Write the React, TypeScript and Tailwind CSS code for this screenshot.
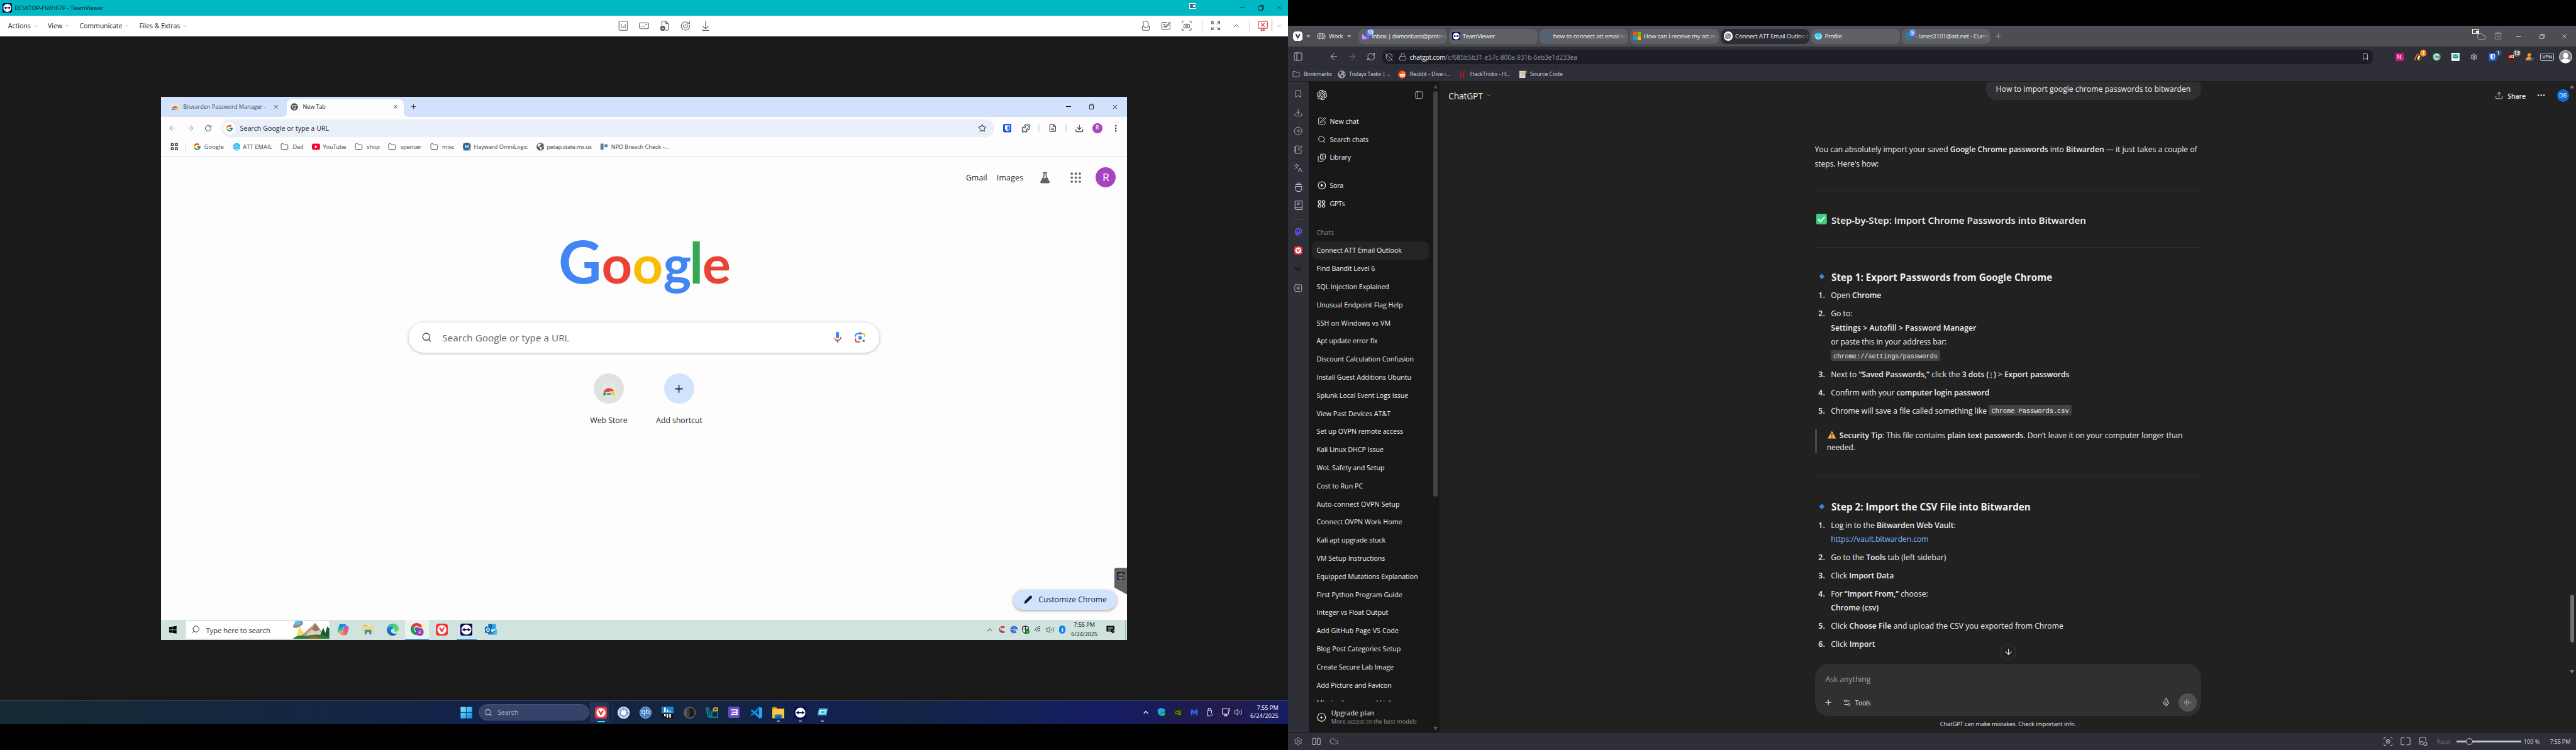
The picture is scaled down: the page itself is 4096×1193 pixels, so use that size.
import React, { useLayoutEffect, useRef } from "react";
import {
  ArrowDown, ArrowLeft, ArrowRight, Bookmark, Bus, ChevronDown, ChevronUp, CircleArrowRight,
  Cloud, Download, Folder, Images, Languages, Lock, Mic, MoreHorizontal, MoreVertical,
  NotebookPen, PanelLeft, Pencil, Plus, Puzzle, RefreshCw, RotateCw, Search, Settings, Settings2, ShieldOff,
  SquarePen, SquarePlus, Star, Trash2, Upload, Volume2, Wifi, X, FileSearch,
} from "lucide-react";
import { FcGoogle } from "react-icons/fc";
import { FaBluetoothB, FaChrome, FaGlobeAmericas, FaMastodon, FaRedditAlien, FaWikipediaW, FaWindows } from "react-icons/fa";
import { SiOpenai } from "react-icons/si";

/* Text whose tracking is tuned so the run takes exactly `w` units. */
function T({ w, className = "", children }: { w: number; className?: string; children: React.ReactNode }) {
  const ref = useRef<HTMLSpanElement>(null);
  useLayoutEffect(() => {
    const el = ref.current!;
    const fit = () => {
      const stage = el.closest("[data-stage]") as HTMLElement;
      const k = stage.getBoundingClientRect().width / 5120;
      el.style.letterSpacing = "0px";
      const natural = el.getBoundingClientRect().width / k;
      el.style.letterSpacing = `${(w - natural) / (el.textContent || " ").length}px`;
    };
    fit();
    document.fonts.ready.then(fit);
  }, [w]);
  return <span ref={ref} className={`inline-block shrink-0 translate-y-[0.05em] whitespace-nowrap ${className}`}>{children}</span>;
}

const Slot = ({ className = "", children }: { className?: string; children?: React.ReactNode }) => (
  <span className={`flex shrink-0 items-center justify-center ${className}`}>{children}</span>
);

/* ---------- brand marks ---------- */
const Tv = ({ s = 16, bg = "#050a50", fg = "#fff" }) => (
  <svg width={s} height={s} viewBox="0 0 24 24" className="shrink-0">
    <rect width="24" height="24" rx="4" fill={bg} />
    <circle cx="12" cy="12" r="10" fill={fg} />
    <path d="M3.5 12l5-3.6v2.4h7V8.400l5 3.600-5 3.600v-2.400h-7v2.400z" fill={bg} />
  </svg>
);
const Viv = ({ s = 24, bg = "#ef3939", fg = "#fff" }) => (
  <svg width={s} height={s} viewBox="0 0 24 24" className="shrink-0">
    <rect width="24" height="24" rx="5.500" fill={bg} />
    <circle cx="12" cy="12" r="9" fill={fg} />
    <path d="M8 8.500l3.800 7 4-7" fill="none" stroke={bg} strokeWidth="3" strokeLinecap="round" strokeLinejoin="round" />
  </svg>
);
const Att = ({ dim = false }) => (
  <svg width="16" height="16" viewBox="0 0 16 16" className="shrink-0">
    <circle cx="8" cy="8" r="7.500" fill={dim ? "#1593b8" : "#1fb6ea"} />
    <g fill="none" stroke={dim ? "#5b5b63" : "#fff"} strokeWidth="1">
      <path d="M2 4q5 2.500 11 0M0 7q7 2.800 15 0M1 10q7 2.800 14 0M3 13q5 2 10 0" />
    </g>
  </svg>
);
const Store = ({ s = 16 }) => (
  <svg width={s} height={s} viewBox="0 0 24 24" className="shrink-0">
    <path d="M1 2h22v21H1z" fill="#e6e8e6" />
    <path d="M9 5.500q3 2 6 0" stroke="#c9cbc9" fill="none" />
    <path d="M2 23a10 10 0 0 1 3-7l4 7z" fill="#34a058" />
    <path d="M3 17a10 10 0 0 1 18 0l-6 1H9z" fill="#dd4b3e" />
    <path d="M22 23a10 10 0 0 0-2-7h-7l3 7z" fill="#fcc934" />
    <path d="M7.500 23a4.500 4.500 0 0 1 9 0z" fill="#4285f4" stroke="#fff" />
  </svg>
);
const Chrome = () => (
  <svg width="26" height="26" viewBox="0 0 26 26">
    <path d="M12 12L1.600 6A12 12 0 0 1 22.400 6z" fill="#e33b2e" />
    <path d="M12 12L1.600 6A12 12 0 0 0 12 24z" fill="#279847" />
    <path d="M12 12L22.400 6A12 12 0 0 1 12 24z" fill="#fbc116" />
    <path d="M12 6h10.400L12 12z" fill="#e33b2e" />
    <circle cx="12" cy="12" r="6" fill="#fff" /><circle cx="12" cy="12" r="4.500" fill="#2f7be8" />
    <circle cx="18" cy="18" r="7.800" fill="#9233b0" />
    <text x="18" y="21.500" fontSize="10" fill="#fff" textAnchor="middle" fontFamily="Roboto">R</text>
  </svg>
);
const Edge = () => (
  <svg width="24" height="24" viewBox="0 0 24 24">
    <defs>
      <linearGradient id="eg" x1="0" y1="0" x2="1" y2="0.400"><stop offset="0" stopColor="#2aa5e0" /><stop offset="1" stopColor="#5be05a" /></linearGradient>
      <linearGradient id="eb" x1="0" y1="0" x2="1" y2="1"><stop offset="0" stopColor="#1a86d8" /><stop offset="1" stopColor="#0b4f9c" /></linearGradient>
    </defs>
    <path d="M0 12C0 5 5.500 0 12 0s12 5 12 10.500c0 3.500-3 5.500-6 5.500-3.500 0-4-1.500-3-3 1-2-1-5-4.500-5C5 8 1.500 10 0 12z" fill="url(#eg)" />
    <path d="M0 12c1-4 5-6 9-5.500 3.500.5 4 2.500 3.500 4C9 10 7.500 13 8.500 16s5.500 5.500 12 3.500C18.500 22.500 15.500 24 12 24 5 24 0 18.500 0 12z" fill="url(#eb)" />
  </svg>
);
const Copilot = () => (
  <svg width="24" height="24" viewBox="0 0 24 24">
    <defs>
      <linearGradient id="ca" x1="0" y1="0" x2="0.300" y2="1"><stop offset="0" stopColor="#1468dc" /><stop offset="0.500" stopColor="#19a9d6" /><stop offset="1" stopColor="#c6d338" /></linearGradient>
      <linearGradient id="cb" x1="1" y1="0" x2="0" y2="1"><stop offset="0" stopColor="#a457f0" /><stop offset="0.500" stopColor="#f0578f" /><stop offset="1" stopColor="#ffa13d" /></linearGradient>
    </defs>
    <path d="M7 1h8c2 0 2.500 1 3 3l.5 2h-3c-2 0-2.500 1-3 3l-2 7c-.5 2-1.500 3-3 3H4c-3 0-4-2-3-5l3-10c.6-2 1.500-3 3-3z" fill="url(#ca)" />
    <path d="M17 23H9c-2 0-2.500-1-3-3l-.5-2h3c2 0 2.500-1 3-3l2-7c.5-2 1.500-3 3-3H20c3 0 4 2 3 5l-3 10c-.6 2-1.500 3-3 3z" fill="url(#cb)" />
  </svg>
);
const Explorer = ({ s = 24 }) => (
  <svg width={s} height={s} viewBox="0 0 24 24">
    <path d="M0 2.500Q0 1 1.500 1H8l2 3H0z" fill="#e09a0c" />
    <path d="M0 4h24v17.500q0 1.500-1.500 1.500h-21Q0 23 0 21.500z" fill="#fdc93a" />
    <path d="M4.500 23v-5q0-2.500 2.500-2.500h10q2.500 0 2.500 2.500v5z" fill="#1379d1" />
    <path d="M8.500 19h7v4h-7z" fill="#0f5fae" />
  </svg>
);
const ClassicExplorer = () => (
  <svg width="23" height="22" viewBox="0 0 23 22">
    <path d="M1 2h8l1.500 2H1z" fill="#d99a1c" /><path d="M1 4h21v14H1z" fill="#fcd56b" />
    <path d="M5 20v-8q0-1 1-1h11q1 0 1 1v8h-4v-5H9v5z" fill="#2c8fd8" />
  </svg>
);
const Outlook = () => (
  <svg width="24" height="24" viewBox="0 0 24 24">
    <path d="M7 1h15v10H7z" fill="#2aa4ea" /><path d="M7 1h7.500v10H7z" fill="#1267b4" />
    <path d="M6 11l9 6 9-6v9.500q0 1.500-1.500 1.500H6z" fill="#1a86d8" /><path d="M24 12l-10 10h8.500q1.500 0 1.500-1.500z" fill="#4cc0f4" />
    <rect y="6" width="12.500" height="12.500" rx="1" fill="#0f6cbd" />
    <ellipse cx="6.200" cy="12.200" rx="2.800" ry="3.200" fill="none" stroke="#fff" strokeWidth="1.600" />
  </svg>
);
const Scene = () => (
  <svg width="72" height="36" viewBox="0 0 72 36">
    <path d="M12 12L6 36h24z" fill="#f4dd6b" />
    <path d="M12 34L44 5l22 30z" fill="#c3987c" /><path d="M44 5l-8 18 12 5 10-4z" fill="#9c745c" /><path d="M30 24l8-6 8 4 6-4 8 12H26z" fill="#d9cfc8" />
    <ellipse cx="10" cy="8" rx="11" ry="5.500" transform="rotate(-28 10 8)" fill="#8b909c" /><ellipse cx="9" cy="4.500" rx="6" ry="4" fill="#52c4ec" />
    <path d="M0 36q10-9 26-5 20-6 46 0v6H0z" fill="#2b7c35" /><path d="M28 36l12-6 16 6z" fill="#a0622d" />
    <path d="M60 14l-6 16h12zM68 12l-6 20h10V16z" fill="#1d5a33" />
  </svg>
);
const Win11 = () => (
  <svg width="24" height="24" viewBox="0 0 24 24">
    <defs><linearGradient id="w" x1="0" y1="0" x2="1" y2="1"><stop offset="0" stopColor="#7fe6fb" /><stop offset="1" stopColor="#0a8cf0" /></linearGradient></defs>
    <path d="M.5.500h11v11H.5zM12.500.500h11v11h-11zM.5 12.500h11v11H.5zM12.500 12.500h11v11h-11z" fill="url(#w)" />
  </svg>
);
const Restore = ({ s = 11, c = "#111" }) => (
  <svg width={s} height={s} viewBox="0 0 11 11" fill="none" stroke={c}><path d="M.5 2.500h7.500v8H.5z" /><path d="M3 2.500V.5h7.500v8H8" /></svg>
);
const BwShield = ({ s = 18 }) => (
  <svg width={s} height={s} viewBox="0 0 18 18"><rect width="18" height="18" rx="3" fill="#1a5ae0" /><path d="M4 3h10v6.500c0 3-3 5-5 6-2-1-5-3-5-6z" fill="#fff" /><path d="M9 4.500h3.500v5c0 2-2 3.500-3.500 4.300z" fill="#1a5ae0" /></svg>
);
const GlobeDot = ({ c = "#5f6368" }) => <FaGlobeAmericas size={16} color={c} className="shrink-0" />;
const Flask = () => (
  <svg width="24" height="24" viewBox="0 0 24 24" className="shrink-0" fill="none" stroke="#5f6368" strokeWidth="2">
    <path d="M8 2h8M10 2v7L4 20q-.7 2 1.500 2h13q2.200 0 1.500-2L14 9V2" /><path d="M8 14l8-1 4 8H4z" fill="#5f6368" />
  </svg>
);
const GDots = () => (
  <svg width="24" height="24" viewBox="0 0 24 24" className="shrink-0" fill="#5f6368">
    {[4, 12, 20].map((x) => [4, 12, 20].map((y) => <circle key={`${x}-${y}`} cx={x} cy={y} r="2.300" />))}
  </svg>
);
const MicG = () => (
  <svg width="24" height="24" viewBox="0 0 24 24" fill="none" strokeWidth="2.200">
    <rect x="8.800" y="1" width="6.400" height="13" rx="3.200" fill="#4285f4" />
    <path d="M5 11a7 7 0 0 0 2 5" stroke="#fbbc04" /><path d="M7 16a7 7 0 0 0 10 0q2-2 2-5" stroke="#ea4335" /><path d="M12 18v5" stroke="#34a853" />
  </svg>
);
const Lens = () => (
  <svg width="24" height="24" viewBox="0 0 24 24" fill="none" strokeWidth="2.400">
    <path d="M3 11V8q0-3 3-3h10" stroke="#4285f4" /><path d="M8 5l1.500-3h5L16 5z" fill="#4285f4" /><path d="M16 5h2q3 0 3 3v3" stroke="#fbbc04" />
    <path d="M3 14v4q0 3 3 3h6" stroke="#ea4335" /><circle cx="12" cy="13" r="3.600" fill="#4285f4" /><circle cx="19" cy="19" r="2.400" fill="#34a853" />
  </svg>
);
const Caret = () => <svg width="8" height="5" viewBox="0 0 8 5" className="shrink-0"><path d="M0 0h8L4 5z" fill="#a9a9b0" /></svg>;
const Diamond = () => <svg width="12" height="12" viewBox="0 0 12 12"><path d="M6 .5L11.500 6 6 11.500.5 6z" fill="#3f86dd" /></svg>;
const Tri = ({ down = false, c = "#5c5c5c" }) => <svg width="9" height="7" viewBox="0 0 9 7"><path d={down ? "M0 0h9L4.500 7z" : "M0 7h9L4.500 0z"} fill={c} /></svg>;

/* ---------- remote desktop ---------- */
const Bm = ({ icon, label, w, gap = "gap-[6px]" }: { icon: React.ReactNode; label: string; w: number; gap?: string }) => (
  <span className={`flex shrink-0 items-center ${gap}`}>{icon}<T w={w} className="text-[11.500px] text-[#3c4043]">{label}</T></span>
);
const Fold = () => <Folder size={16} color="#44484c" strokeWidth={1.800} className="shrink-0" />;

function RemoteChrome() {
  return (
    <div className="relative flex h-[1040px] flex-col bg-[#fdfdfd]">
      <div className="flex h-[40px] items-center bg-[#d2e1fc] pl-[20px]">
        <Store />
        <T w={164} className="ml-[8px] text-[11.500px] text-[#474b50]">Bitwarden Password Manager -</T>
        <Slot className="ml-[12px] w-[16px]"><X size={12} strokeWidth={2.300} color="#333" /></Slot>
        <div className="relative ml-[14px] flex h-[34px] w-[232px] items-center self-end rounded-t-[10px] bg-[#fdfdfd] px-[8px] pb-[6px]">
          <svg className="absolute bottom-0 -left-[10px]" width="10" height="10"><path d="M10 0v10H0q10 0 10-10z" fill="#fdfdfd" /></svg>
          <svg className="absolute -right-[10px] bottom-0" width="10" height="10"><path d="M0 0v10h10Q0 10 0 0z" fill="#fdfdfd" /></svg>
          <FaChrome size={15} color="#4b4f54" />
          <T w={45} className="ml-[9px] text-[11.500px] text-[#1f1f1f]">New Tab</T>
          <Slot className="ml-auto w-[16px]"><X size={12} strokeWidth={2.300} color="#222" /></Slot>
        </div>
        <Slot className="ml-[12px] w-[16px]"><Plus size={14} strokeWidth={2} color="#333" /></Slot>
        <Slot className="ml-auto w-[46px]"><span className="h-[1px] w-[10px] bg-black" /></Slot>
        <Slot className="w-[46px]"><Restore c="#000" /></Slot>
        <Slot className="mr-[1px] w-[46px]"><X size={15} strokeWidth={1.500} color="#000" /></Slot>
      </div>
      <div className="flex h-[46px] shrink-0 items-center pl-[4px]">
        <Slot className="w-[36px]"><ArrowLeft size={17} color="#a5a8ad" /></Slot>
        <Slot className="w-[36px]"><ArrowRight size={17} color="#a5a8ad" /></Slot>
        <Slot className="w-[36px]"><RotateCw size={15} color="#3f4246" /></Slot>
        <div className="ml-[8px] flex h-[34px] w-[1536px] items-center rounded-full bg-[#e9f0f9] pl-[4px]">
          <Slot className="h-[24px] w-[24px] rounded-full bg-white"><FcGoogle size={15} /></Slot>
          <T w={177} className="ml-[9px] text-[13.300px] text-[#1f2125]">Search Google or type a URL</T>
          <Star size={17} color="#3f4246" strokeWidth={1.800} className="mr-[15px] ml-auto" />
        </div>
        <Slot className="ml-[17px] w-[18px]"><BwShield s={17} /></Slot>
        <Slot className="ml-[19px] w-[18px]"><Puzzle size={18} color="#3f4246" /></Slot>
        <span className="ml-[16px] h-[16px] w-[2px] bg-[#cfe0fb]" />
        <Slot className="ml-[17px] w-[18px]"><FileSearch size={17} color="#3f4246" /></Slot>
        <span className="ml-[17px] h-[16px] w-[2px] bg-[#cfe0fb]" />
        <Slot className="ml-[17px] w-[18px]"><Download size={18} color="#3f4246" /></Slot>
        <Slot className="ml-[16px] h-[20px] w-[20px] rounded-full bg-[#a843bd] font-[Roboto] text-[11px] text-white">R</Slot>
        <Slot className="ml-[18px] w-[18px]"><MoreVertical size={18} strokeWidth={2.500} color="#3f4246" /></Slot>
      </div>
      <div className="flex h-[35px] shrink-0 items-center border-b border-[#d9dbde] pb-[6px] pl-[17px]">
        <svg width="18" height="16" viewBox="0 0 18 16" fill="none" stroke="#3f4246" strokeWidth="1.800"><path d="M3 1.500h4v4H3zM11 1.500h4v4h-4zM3 10h4v4H3zM11 10h4v4h-4z" /></svg>
        <span className="mr-[14px] ml-[14px] h-[16px] w-[1px] bg-[#c3d5f3]" />
        <div className="flex items-center gap-[17px]">
          <Bm icon={<FcGoogle size={16} />} label="Google" w={39} />
          <Bm icon={<Att />} label="ATT EMAIL" w={58} gap="gap-[5px]" />
          <Bm icon={<Fold />} label="Dad" w={21} gap="gap-[8px]" />
          <Bm icon={<svg width="16" height="16" viewBox="0 0 16 16"><rect y="2" width="16" height="12" rx="3" fill="#f5062e" /><path d="M6 5v6l5-3z" fill="#fff" /></svg>} label="YouTube" w={46} />
          <Bm icon={<Fold />} label="shop" w={26} gap="gap-[8px]" />
          <Bm icon={<Fold />} label="spencer" w={42} gap="gap-[8px]" />
          <Bm icon={<Fold />} label="misc" w={24} gap="gap-[8px]" />
          <Bm icon={<Slot className="h-[16px] w-[16px] bg-[#b9c4ca]"><Slot className="h-[15px] w-[15px] rounded-full bg-[#1b5d8a] text-[11px] font-bold text-white">H</Slot></Slot>} label="Hayward OmniLogic" w={107} />
          <Bm icon={<GlobeDot />} label="petap.state.ms.us" w={89} gap="gap-[5px]" />
          <Bm icon={<svg width="16" height="16" viewBox="0 0 16 16" fill="#5d7f9b"><path d="M1 2h6v12H1zM9 3h6v6H9z" /></svg>} label="NPD Breach Check -..." w={115} />
        </div>
      </div>
      <div className="flex flex-1 flex-col items-center pt-[20px]">
        <div className="flex h-[40px] items-center self-end pr-[22px] text-[15.200px] text-[#202124]">
          <T w={42}>Gmail</T>
          <T w={53} className="ml-[19px]">Images</T>
          <Slot className="ml-[31px]"><Flask /></Slot>
          <Slot className="ml-[37px]"><GDots /></Slot>
          <Slot className="ml-[28px] h-[40px] w-[40px] rounded-full bg-[#a843bd] font-[Roboto] text-[21px] text-white">R</Slot>
        </div>
        <div className="mt-[86px] flex h-[120px] items-baseline font-[Lato] text-[106px] leading-[120px] font-bold">
          <span className="w-[85px] text-center text-[118px] text-[#4285f4]">G</span>
          <span className="w-[62px] text-center text-[#ea4335]">o</span>
          <span className="w-[60px] text-center text-[#fbbc05]">o</span>
          <span className="w-[58px] text-center text-[#4285f4]">g</span>
          <span className="w-[21px] text-[112px] text-[#34a853]"><span className="-mx-[5px]">l</span></span>
          <span className="w-[54px] text-center text-[#ea4335]">e</span>
        </div>
        <div className="mt-[62px] flex h-[60px] w-[934px] items-center rounded-full bg-white pr-[25px] pl-[25px] shadow-[0_1px_7px_rgba(32,33,36,0.300)]">
          <Search size={21} color="#5f6368" strokeWidth={2.300} />
          <T w={253} className="ml-[20px] text-[19px] text-[#5f6368]">Search Google or type a URL</T>
          <Slot className="mr-[22px] ml-auto"><MicG /></Slot>
          <Lens />
        </div>
        <div className="mt-[42px] flex">
          <div className="flex w-[140px] flex-col items-center">
            <Slot className="h-[60px] w-[60px] rounded-full bg-[#e0e2df]"><Store s={28} /></Slot>
            <T w={74} className="mt-[22px] text-[15.200px] leading-[20px] text-[#1f1f1f]">Web Store</T>
          </div>
          <div className="flex w-[140px] flex-col items-center">
            <Slot className="h-[60px] w-[60px] rounded-full bg-[#d3e3fd]"><Plus size={24} color="#041e49" /></Slot>
            <T w={92} className="mt-[22px] text-[15.200px] leading-[20px] text-[#1f1f1f]">Add shortcut</T>
          </div>
        </div>
      </div>
      <div className="absolute right-[20px] bottom-[20px] flex h-[40px] w-[206px] items-center rounded-full bg-[#d3e3fd] pl-[21px] shadow-[0_2px_5px_rgba(0,0,0,0.350)]">
        <Pencil size={17} fill="#041e49" color="#041e49" />
        <T w={136} className="ml-[12px] text-[15.200px] text-[#041e49]">Customize Chrome</T>
      </div>
      <div className="absolute right-0 bottom-[50px] flex h-[53px] w-[25px] justify-center rounded-tl-[4px] bg-[#606060] pt-[8px] [clip-path:polygon(0_0,100%_0,100%_100%,0_74%)]">
        <Tv s={16} bg="#12123a" fg="#6d6d72" />
      </div>
    </div>
  );
}

function RemoteTaskbar() {
  return (
    <div className="flex h-[40px] items-center bg-[#d0e3df]">
      <Slot className="w-[48px]"><FaWindows size={17} color="#000" /></Slot>
      <div className="flex h-[39px] w-[288px] items-center border border-[#c2c6c5] bg-white pl-[11px]">
        <Search size={18} strokeWidth={1.500} color="#222" className="scale-x-[-1]" />
        <T w={128} className="ml-[11px] text-[14.500px] text-[#333]">Type here to search</T>
        <span className="ml-auto self-end"><Scene /></span>
      </div>
      <Slot className="ml-[2px] w-[49px]"><Copilot /></Slot>
      <Slot className="w-[49px]"><ClassicExplorer /></Slot>
      <Slot className="w-[49px]"><Edge /></Slot>
      <Slot className="h-[40px] w-[48px] border-b-2 border-[#0078d7] bg-[#eaf2f0]"><Chrome /></Slot>
      <Slot className="w-[50px]"><Viv /></Slot>
      <Slot className="mx-[4px] h-[40px] w-[40px] border-b-2 border-[#0078d7]"><Tv s={24} /></Slot>
      <Slot className="w-[50px]"><Outlook /></Slot>
      <div className="ml-auto flex h-full items-center">
        <Slot className="w-[24px]"><ChevronUp size={17} strokeWidth={1.700} color="#111" /></Slot>
        <Slot className="w-[24px]"><svg width="16" height="16" viewBox="0 0 16 16"><path d="M14 3a7 7 0 1 0 0 10l-3-2.500a3.500 3.500 0 1 1 0-5z" fill="#d2322c" /><path d="M7 7l3 6-5 1z" fill="#4178c0" /><path d="M4 2l3 6-3 1z" fill="#f3c99a" /></svg></Slot>
        <Slot className="w-[24px]"><svg width="16" height="16" viewBox="0 0 16 16"><circle cx="8" cy="8" r="7.500" fill="#3b6fc9" /><path d="M8 1v13M1 8h14" stroke="#bcd0ee" /><path d="M9 9h6v6z" fill="#d0e3df" /></svg></Slot>
        <Slot className="w-[24px]"><svg width="17" height="17" viewBox="0 0 17 17"><path d="M8 1l6 2v5c0 4-3 6-6 8-3-2-6-4-6-8V3z" fill="#fff" stroke="#111" strokeWidth="1.300" /><path d="M8 1v14M2 7h12" stroke="#111" strokeWidth="1.300" /><circle cx="12" cy="12" r="4.500" fill="#0f8a38" /><path d="M10 12l1.500 1.500L14 11" stroke="#fff" fill="none" /></svg></Slot>
        <Slot className="w-[24px]"><Wifi size={16} strokeWidth={1.500} color="#111" className="rotate-[-40deg]" /></Slot>
        <Slot className="w-[24px]"><Volume2 size={17} strokeWidth={1.300} color="#111" /></Slot>
        <Slot className="w-[24px]"><Slot className="h-[16px] w-[12px] rounded-full bg-[#0a7fe6]"><FaBluetoothB size={10} color="#fff" /></Slot></Slot>
        <div className="flex w-[64px] flex-col items-center text-[11.500px] leading-[18px] text-[#111]">
          <T w={42}>7:55 PM</T>
          <T w={52}>6/24/2025</T>
        </div>
        <Slot className="w-[40px]"><svg width="17" height="17" viewBox="0 0 17 17"><path d="M.5.500h16V12h-3v4L9.500 12h-9z" fill="#0a0a0a" /><path d="M3.500 3.500h10M3.500 6.300h10M3.500 9h6" stroke="#dbe8e5" strokeWidth="1.200" /><path d="M10 13.500a3.500 3.500 0 1 0 4-5 4 4 0 0 1-4 5z" fill="#0a0a0a" stroke="#d0e3df" strokeWidth=".7" /></svg></Slot>
        <span className="mr-[3px] ml-[9px] h-full w-[1px] bg-[#a3b3b0]" />
      </div>
    </div>
  );
}

function TvMenu({ label, w }: { label: string; w: number }) {
  return <span className="flex items-center gap-[5px]"><T w={w} className="text-[13.300px] text-[#1c1c1c]">{label}</T><ChevronDown size={10} strokeWidth={2} color="#777" /></span>;
}

function Dot() {
  return <span className="absolute bottom-[5px] h-[3px] w-[6px] rounded-full bg-[#9aa3b5]" />;
}
const TaskApp = ({ children, dot = false }: { children: React.ReactNode; dot?: boolean }) => (
  <Slot className="relative h-[48px] w-[44px]">{children}{dot && <Dot />}</Slot>
);

function LeftMonitor() {
  return (
    <div className="flex h-[1491px] w-[2560px] shrink-0 flex-col bg-black">
      <div className="flex h-[31px] shrink-0 items-center bg-[#00b7c4] pl-[5px]">
        <Tv s={19} />
        <T w={177} className="ml-[5px] text-[11.500px] text-[#0b1b1f]">DESKTOP-F6VH67P - TeamViewer</T>
        <span className="mr-[72px] mb-[7px] ml-auto flex h-[11px] w-[14px] items-center justify-end border border-white bg-[#3a6f80] pr-[2px]"><span className="h-[4px] w-[4px] bg-white" /></span>
        <Slot className="w-[38px]"><span className="h-[1.500px] w-[9px] bg-[#111]" /></Slot>
        <Slot className="w-[38px]"><Restore /></Slot>
        <Slot className="w-[34px]"><X size={13} strokeWidth={1.600} color="#111" /></Slot>
      </div>
      <div className="flex h-[41px] shrink-0 items-center border-b border-[#bfc3c6] bg-white pl-[16px]">
        <div className="flex gap-[19px]">
          <TvMenu label="Actions" w={45} /><TvMenu label="View" w={29} /><TvMenu label="Communicate" w={85} /><TvMenu label="Files & Extras" w={81} />
        </div>
        <div className="ml-[856px] flex gap-[21px] text-[#5c6064]">
          <svg width="20" height="20" viewBox="0 0 20 20" fill="none" stroke="currentColor" strokeWidth="1.400"><rect x="1.500" y="1" width="17" height="18" rx="2.500" /><path d="M6 15V6M10 15v-4M14 15V7" /></svg>
          <svg width="20" height="20" viewBox="0 0 20 20" fill="none" stroke="currentColor" strokeWidth="1.400"><rect x="1" y="4" width="18" height="12" rx="2.500" /><path d="M4.500 11.500h2M9 11.500h2M13 7.500h3" strokeWidth="2" /></svg>
          <svg width="20" height="20" viewBox="0 0 20 20" fill="none" stroke="currentColor" strokeWidth="1.400"><path d="M4 9V3q0-2 2-2h6l5 5v11q0 2-2 2h-4M12 1v5h5" /><circle cx="6" cy="15" r="4.500" fill="currentColor" /><path d="M4 14l2 2 2-2" stroke="#fff" /></svg>
          <svg width="20" height="20" viewBox="0 0 20 20" fill="none" stroke="currentColor" strokeWidth="1.400"><path d="M15 4a8.300 8.300 0 1 0 3 5M18 1v5h-5M10 6v5M7.500 7.500a4 4 0 1 0 5 0" /></svg>
          <svg width="20" height="20" viewBox="0 0 20 20" fill="none" stroke="currentColor" strokeWidth="1.500"><path d="M10 1v15M4.500 11l5.500 5 5.500-5M3 19.200h14" /></svg>
        </div>
        <div className="mr-[13px] ml-auto flex items-center text-[#5c6064]">
          <svg width="20" height="20" viewBox="0 0 20 20" fill="none" stroke="currentColor" strokeWidth="1.300"><path d="M5 11V3q0-2 2-2h5l3 4v6M3 11h3q1 3 4 3t4-3h3v6q0 2-2 2H5q-2 0-2-2z" /></svg>
          <svg className="ml-[21px]" width="20" height="20" viewBox="0 0 20 20" fill="none" stroke="currentColor" strokeWidth="1.300"><path d="M12 3H4Q1.500 3 1.500 5.500v9Q1.500 17 4 17h12q2 0 2-2V8M4 9q3-4 4-1t-2 4 3 0l8-9 2 1.500-8 8-2 .5" /></svg>
          <svg className="ml-[21px]" width="20" height="20" viewBox="0 0 20 20" fill="none" stroke="currentColor" strokeWidth="1.400"><path d="M1 5V3q0-2 2-2h2M15 1h2q2 0 2 2v2M19 15v2q0 2-2 2h-2M5 19H3q-2 0-2-2v-2M4.500 14V8h3l1-1.500h3l1 1.500h3v6z" /><circle cx="10" cy="11" r="2" /></svg>
          <span className="ml-[21px] h-[20px] w-[1px] bg-[#d5d7d9]" />
          <svg className="ml-[15px]" width="20" height="20" viewBox="0 0 20 20" fill="none" stroke="currentColor" strokeWidth="1.600"><path d="M2 7V2h5M2 2l5 5M18 7V2h-5M18 2l-5 5M2 13v5h5M2 18l5-5M18 13v5h-5M18 18l-5-5" /></svg>
          <ChevronUp size={20} strokeWidth={1.500} className="ml-[22px]" />
          <span className="ml-[15px] h-[20px] w-[1px] bg-[#d5d7d9]" />
          <svg className="ml-[16px]" width="20" height="20" viewBox="0 0 20 20" fill="none" stroke="#d3433f" strokeWidth="1.600"><rect x="1" y="1" width="18" height="14" rx="2" /><path d="M6.500 4.500l7 7M13.500 4.500l-7 7M8 15v3.500M12 15v3.500M5.500 19h9" /></svg>
          <span className="ml-[8px] h-[24px] w-[1px] bg-[#8d9093]" />
          <ChevronDown size={10} strokeWidth={2} className="ml-[8px]" />
        </div>
      </div>
      <div className="flex h-[1320px] shrink-0 justify-center bg-[#191919] pt-[120px]">
        <div className="h-[1080px] w-[1920px]"><RemoteChrome /><RemoteTaskbar /></div>
      </div>
      <div className="flex h-[48px] shrink-0 items-center border-t border-[#3b4456] bg-[linear-gradient(90deg,#152a35_0px,#14283d_400px,#12224c_1000px,#14263f_1380px,#122150_1650px,#132444_1800px,#14205a_2080px,#151c62_2200px,#201b50_2380px,#221b50_2460px,#151d66_2560px)] pl-[905px]">
        <TaskApp><Win11 /></TaskApp>
        <div className="ml-[2px] flex h-[32px] w-[220px] items-center rounded-full border border-[#47526f] bg-[#35426a] pl-[10px]">
          <Search size={16} color="#c3cbdc" />
          <T w={41} className="ml-[11px] text-[13.300px] text-[#aeb8cc]">Search</T>
        </div>
        <Slot className="relative ml-[2px] h-[40px] w-[38px] rounded-[4px] bg-[#27335a] pl-[4px]"><Viv /><span className="absolute bottom-0 left-[14px] h-[3px] w-[16px] rounded-full bg-[#1cecff]" /></Slot>
        <span className="h-[38px] w-[6px] rounded-r-[4px] border-r border-[#27335a]" />
        <TaskApp><svg width="24" height="24" viewBox="0 0 24 24"><circle cx="12" cy="12" r="12" fill="#f2f6fb" /><circle cx="12" cy="12" r="7.500" fill="none" stroke="#4b8fd8" strokeWidth="5" strokeDasharray="1.600 1" /><circle cx="12" cy="12" r="4" fill="#fff" /></svg></TaskApp>
        <TaskApp><Slot className="h-[24px] w-[24px] rounded-full border border-[#b9d2ef] bg-[#3f7cc8] pb-[3px] text-[14px] text-white">qb</Slot></TaskApp>
        <TaskApp><svg width="24" height="24" viewBox="0 0 24 24"><rect width="24" height="24" rx="2.500" fill="#17181c" /><path d="M0 13V2.500Q0 0 2.500 0h19Q24 0 24 2.500V13z" fill="#1c87c4" /><path d="M6.500 2v9M11.500 6v5M17 9.500v2M6.500 15v4M11.500 15v7M17 15v7" stroke="#fff" strokeWidth="3" /></svg></TaskApp>
        <TaskApp><svg width="24" height="24" viewBox="0 0 24 24"><circle cx="12" cy="12" r="11" fill="#1b1b1b" stroke="#77777a" strokeWidth="1.600" /><path d="M7 2.500a11 11 0 0 0 0 19z" fill="#555" /><path d="M7 2h5v20H7z" fill="#3b3b3b" /></svg></TaskApp>
        <TaskApp><svg width="26" height="24" viewBox="0 0 26 24" fill="none" strokeWidth="2.800"><path d="M1 3h4l3 11V21h4V10h12v11H14" stroke="#0e7b8c" /><path d="M1 3l4 17h4" stroke="#0e7b8c" /><path d="M14 7.500h9.500V3H17l-2 4" stroke="#f0921f" /></svg></TaskApp>
        <TaskApp><Slot className="h-[22px] w-[22px] rounded-[3px] bg-[#6a4bc9]"><svg width="14" height="12" viewBox="0 0 14 12" fill="none" stroke="#fff" strokeWidth="2.200"><path d="M0 1.500h12.500v9H0M2 6h10" /></svg></Slot></TaskApp>
        <TaskApp><svg width="24" height="24" viewBox="0 0 24 24"><path d="M17.500 0L24 3v18l-6.500 3z" fill="#2aa6f2" /><path d="M18 0v7L3 18.500l-2.500-2z" fill="#0f7fcb" /><path d="M18 24v-7L3 5.500l-2.500 2z" fill="#1390dc" /></svg></TaskApp>
        <TaskApp dot><Explorer /></TaskApp>
        <TaskApp dot><Tv s={24} /></TaskApp>
        <TaskApp dot><svg width="22" height="18" viewBox="0 0 22 18"><path d="M4 1h17.500l-2.500 14H1z" fill="#3db7e8" /><path d="M6 4h12l-1.300 8H4.600z" fill="#e8f8ff" /><path d="M8 6.500h8l-.7 3.500H7.300z" fill="#2f9ed2" /></svg></TaskApp>
        <div className="mr-[19px] ml-auto flex items-center">
          <Slot className="w-[32px]"><ChevronUp size={15} strokeWidth={2.500} color="#fff" /></Slot>
          <Slot className="w-[32px]"><svg width="17" height="17" viewBox="0 0 17 17"><path d="M8 0l7 2.500v5c0 4-3 7-7 9-4-2-7-5-7-9v-5z" fill="#21a3e8" /><circle cx="12" cy="12" r="4.500" fill="#0f9a48" /><path d="M10 12l1.500 1.500L14 11" stroke="#fff" fill="none" /></svg></Slot>
          <Slot className="w-[32px]"><Slot className="h-[16px] w-[16px] bg-[#1d2a1e]"><svg width="12" height="9" viewBox="0 0 12 9" fill="none" stroke="#76b900" strokeWidth="1.300"><path d="M0 4.500Q5-1 9 4.500 5 9 0 4.500M7 1h4v7H7" /></svg></Slot></Slot>
          <Slot className="w-[32px]"><svg width="17" height="15" viewBox="0 0 17 15"><path d="M3 14Q-1 5 4 1l4.500 5L13 1q5 4 1 13l-2.500-1 1-6-4 4.500-4-4.500 1 6z" fill="#2f64e8" /></svg></Slot>
          <Slot className="w-[32px]"><svg width="14" height="17" viewBox="0 0 14 17" fill="none" stroke="#fff" strokeWidth="1.200"><path d="M4 5V1h5v4M2.500 5h8v6M2.500 5v11H7M7.500 14l2 2 4-4" /></svg></Slot>
          <Slot className="w-[32px]"><svg width="17" height="17" viewBox="0 0 17 17" fill="none" stroke="#fff" strokeWidth="1.200"><path d="M10 1.500H1v11h12V7M4 16h7M6 12.500V16M9 12.500V16M12 1h4v4h-4zM14 5v3" /></svg></Slot>
          <Slot className="-ml-[4px] w-[24px]"><Volume2 size={17} strokeWidth={1.500} color="#fff" /></Slot>
          <div className="ml-[11px] flex w-[57px] flex-col items-end text-[11.500px] leading-[16px] text-white">
            <T w={43}>7:55 PM</T>
            <T w={56}>6/24/2025</T>
          </div>
        </div>
      </div>
    </div>
  );
}

/* ---------- Vivaldi with ChatGPT ---------- */
const GptMark = () => <Slot className="h-[18px] w-[18px] rounded-full bg-white"><SiOpenai size={12} color="#222" /></Slot>;

function Tab({ icon, label, w, active = false }: { icon: React.ReactNode; label: string; w: number; active?: boolean }) {
  return (
    <div className={`relative flex h-[30px] w-[176px] shrink-0 items-center gap-[5px] rounded-[11px] pl-[6px] ${active ? "bg-[#2c2c34]" : "bg-[#5f5f66]"}`}>
      {icon}
      <T w={w} className="text-[12.300px] text-[#f0f0f2]">{label}</T>
      <span className={`absolute top-[4px] right-[3px] h-[22px] w-[18px] bg-gradient-to-r from-transparent ${active ? "to-[#2c2c34]" : "to-[#5f5f66]"}`} />
    </div>
  );
}
const Badge = ({ children, className }: { children: React.ReactNode; className: string }) => (
  <span className={`absolute flex h-[14px] items-center justify-center rounded-full text-[10.500px] font-semibold text-white ${className}`}>{children}</span>
);

function VivaldiChrome() {
  return (
    <>
      <div className="flex h-[42px] shrink-0 items-center bg-[#4d4d54] pl-[10px]">
        <svg width="19" height="19" viewBox="0 0 19 19" className="shrink-0"><rect width="19" height="19" rx="6" fill="#fff" /><path d="M6 6l3.500 7L13 6" fill="none" stroke="#333" strokeWidth="2.600" strokeLinecap="round" strokeLinejoin="round" /></svg>
        <span className="ml-[7px]"><Caret /></span>
        <Bus size={18} strokeWidth={1.500} color="#e6e6ea" className="ml-[14px] shrink-0" />
        <T w={28} className="ml-[5px] text-[12.300px] text-[#f0f0f2]">Work</T>
        <span className="ml-[8px]"><Caret /></span>
        <div className="ml-[15px] flex gap-[4px]">
          <Tab icon={<span className="relative h-[16px] w-[16px] shrink-0"><svg width="16" height="16" viewBox="0 0 16 16"><path d="M1 3l5 5 9-5v11H1z" fill="#7f55f5" /><path d="M1 3l10 10v1H1z" fill="#b39bff" /></svg><Badge className="-top-[7px] left-[10px] w-[15px] bg-[#5c8cf5]">10</Badge></span>} label="Inbox | damonbass@proton" w={146} />
          <Tab icon={<Tv />} label="TeamViewer" w={64} />
          <Tab icon={<Search size={15} color="#1479c9" strokeWidth={2.200} className="mr-[1px] shrink-0" />} label="how to connect att email to" w={146} />
          <Tab icon={<svg width="16" height="16" className="shrink-0"><path d="M0 0h7.500v7.500H0z" fill="#f25022" /><path d="M8.500 0H16v7.500H8.500z" fill="#7fba00" /><path d="M0 8.500h7.500V16H0z" fill="#00a4ef" /><path d="M8.500 8.500H16V16H8.500z" fill="#ffb900" /></svg>} label="How can I receive my att.ne" w={146} />
          <Tab active icon={<GptMark />} label="Connect ATT Email Outlook" w={145} />
          <Tab icon={<Att />} label="Profile" w={34} />
          <Tab icon={<span className="relative h-[16px] w-[16px] shrink-0"><Att dim /><Badge className="-top-[6px] left-[9px] w-[13px] bg-[#5c8cf5]">5</Badge></span>} label="- lanes3101@att.net - Curre" w={146} />
        </div>
        <Plus size={16} strokeWidth={1.500} color="#b9b9c0" className="ml-[8px] shrink-0" />
        <span className="relative mr-[14px] ml-auto"><Cloud size={20} strokeWidth={1.400} color="#a9a9b0" /><span className="absolute -top-[5px] -left-[8px] h-[11px] w-[13px] border border-white bg-[#55555d]"><span className="absolute right-0 bottom-[2px] h-[4px] w-[4px] bg-white" /></span></span>
        <Trash2 size={18} strokeWidth={1.400} color="#a0a0a8" className="mr-[9px]" />
        <Slot className="w-[46px]"><span className="h-[1.500px] w-[10px] bg-white" /></Slot>
        <Slot className="w-[46px]"><Restore s={10} c="#fff" /></Slot>
        <Slot className="w-[45px]"><X size={14} strokeWidth={1.700} color="#fff" /></Slot>
      </div>
      <div className="flex h-[40px] shrink-0 items-center bg-[#2f2f38] pl-[10px] text-[#d4d4dc]">
        <PanelLeft size={20} strokeWidth={1.300} />
        <ArrowLeft size={20} strokeWidth={1.500} className="ml-[51px]" />
        <ArrowRight size={20} strokeWidth={1.500} color="#7c7c86" className="ml-[17px]" />
        <RefreshCw size={18} strokeWidth={1.500} className="ml-[18px]" />
        <div className="ml-[14px] flex h-[28px] w-[1968px] items-center rounded-[11px] bg-[#1d1d26] pl-[5px]">
          <ShieldOff size={17} strokeWidth={1.400} />
          <Lock size={16} strokeWidth={1.500} className="ml-[10px]" />
          <T w={71} className="ml-[6px] text-[12.600px] text-white">chatgpt.com</T>
          <T w={262} className="text-[12.600px] text-[#9a9aa6]">/c/685b5b31-e57c-800a-931b-6eb3e1d233ea</T>
          <Bookmark size={15} strokeWidth={1.600} className="mr-[7px] ml-auto" />
        </div>
        <div className="ml-[35px] flex">
          <Slot className="w-[37px]"><Slot className="h-[16px] w-[16px] rounded-[2px] bg-[#c8197c] text-[10px] font-bold text-white">SL</Slot></Slot>
          <Slot className="relative w-[37px]"><svg width="17" height="17" viewBox="0 0 17 17"><path d="M1 13L5 4l4-2 4 4 3 5-5 4H3z" fill="#e9832a" /><path d="M3 13l5-9 3 2-3 8zM10 13l4-5 1 3z" fill="#111" /><path d="M6 12l4-7 2 2-3 6z" fill="#fff" /></svg><Badge className="-top-[6px] left-[22px] w-[13px] bg-[#f3952b]">1</Badge></Slot>
          <Slot className="w-[37px]"><svg width="16" height="16" viewBox="0 0 16 16"><circle cx="8" cy="8" r="8" fill="#5fa58a" /><path d="M12 6a4.500 4.500 0 1 0 0 4" fill="none" stroke="#fff" strokeWidth="2" /></svg></Slot>
          <Slot className="w-[37px]"><svg width="16" height="16" viewBox="0 0 16 16"><path d="M0 0h16v16H0z" fill="#fff" /><path d="M2.500 3h11v7h-11z" fill="#14a184" /><path d="M4 5l4 3 6-5" stroke="#fff" fill="none" /><path d="M3 12h10" stroke="#14a184" /></svg></Slot>
          <Slot className="w-[37px]"><Settings size={14} strokeWidth={3} color="#a0a0a6" /></Slot>
          <Slot className="relative w-[37px]"><BwShield s={16} /><Badge className="-top-[6px] left-[23px] w-[13px] bg-[#285068]">1</Badge></Slot>
          <Slot className="relative w-[37px]"><svg width="15" height="16" viewBox="0 0 15 16"><path d="M7.500 0L15 2.500V8c0 4-4 6.500-7.500 8C4 14.500 0 12 0 8V2.500z" fill="#7d0c0c" /><path d="M3 5v4h3V5M8.500 5v4H12V5z" stroke="#fff" strokeWidth="1.300" fill="none" /></svg><Badge className="-top-[6px] left-[22px] w-[15px] bg-[#6a6a6e]">13</Badge></Slot>
          <Slot className="w-[37px]"><svg width="16" height="17" viewBox="0 0 16 17"><circle cx="7" cy="4" r="3.500" fill="#f5973b" /><path d="M0 14q0-6 7-6 3 0 5 2l-4 5H0z" fill="#f5973b" /><path d="M8 13l2.500 2.500L15.500 10" fill="none" stroke="#23a55a" strokeWidth="2" /></svg></Slot>
        </div>
        <Slot className="ml-[2px] h-[16px] w-[28px] rounded-[3px] border border-[#c3c8d0] text-[9.500px] font-semibold text-[#dfe3ea]">VPN</Slot>
        <svg width="26" height="26" viewBox="0 0 26 26" className="ml-[10px]"><circle cx="13" cy="13" r="12.300" fill="#86868a" stroke="#e4e4e8" strokeWidth="1.400" /><ellipse cx="13" cy="10.500" rx="5" ry="6" fill="#fff" /><path d="M4.500 21q1-4 8.500-4t8.500 4q-3.500 4-8.500 4t-8.500-4z" fill="#fff" /></svg>
      </div>
      <div className="flex h-[30px] shrink-0 items-center border-y border-[#1f1f28] bg-[#2f2f38] pl-[9px] text-[11.500px] text-[#cfcfd8]">
        <Folder size={15} strokeWidth={1.400} />
        <T w={56} className="ml-[7px]">Bookmarks</T>
        <span className="mr-[6px] ml-[12px]"><GlobeDot c="#9a9aa2" /></span>
        <T w={82}>Todays Tasks | ...</T>
        <Slot className="mr-[7px] ml-[16px] h-[16px] w-[16px] rounded-full bg-[#f4450f]"><FaRedditAlien size={12} color="#fff" /></Slot>
        <T w={80}>Reddit - Dive i...</T>
        <svg width="16" height="16" viewBox="0 0 16 16" className="mr-[7px] ml-[17px]" fill="none" stroke="#c3161c" strokeWidth="2"><path d="M4 2v4l4 3M12 1L10 8l-3 1M4 15l2-7M11 15l-1-5" /></svg>
        <T w={79}>HackTricks - H...</T>
        <svg width="16" height="16" viewBox="0 0 16 16" className="mr-[6px] ml-[18px]"><path d="M1 1h12v14H1z" fill="#d5dde2" /><path d="M3 4h8M3 7h5" stroke="#8fa2ad" /><path d="M5 13l1-4 8-8 2 2-8 8z" fill="#f3b23a" /><path d="M13 1.500l2-1.500 1.500 2-1.500 1.500z" fill="#e84c6a" /></svg>
        <T w={65}>Source Code</T>
      </div>
    </>
  );
}

const CHATS: [string, number][] = [
  ["Connect ATT Email Outlook", 169], ["Find Bandit Level 6", 116], ["SQL Injection Explained", 144], ["Unusual Endpoint Flag Help", 171],
  ["SSH on Windows vs VM", 147], ["Apt update error fix", 121], ["Discount Calculation Confusion", 193], ["Install Guest Additions Ubuntu", 188],
  ["Splunk Local Event Logs Issue", 182], ["View Past Devices AT&T", 147], ["Set up OVPN remote access", 172], ["Kali Linux DHCP Issue", 133],
  ["WoL Safety and Setup", 135], ["Cost to Run PC", 92], ["Auto-connect OVPN Setup", 165], ["Connect OVPN Work Home", 170],
  ["Kali apt upgrade stuck", 137], ["VM Setup Instructions", 136], ["Equipped Mutations Explanation", 201], ["First Python Program Guide", 170],
  ["Integer vs Float Output", 142], ["Add GitHub Page VS Code", 163], ["Blog Post Categories Setup", 167], ["Create Secure Lab Image", 153],
  ["Add Picture and Favicon", 149], ["Missing Images and Links", 157],
];

function NavRow({ icon, label, w }: { icon: React.ReactNode; label: string; w: number }) {
  return <div className="flex h-[36px] shrink-0 items-center pl-[16px]"><Slot className="mr-[6px] w-[20px]">{icon}</Slot><T w={w}>{label}</T></div>;
}

function Sidebar() {
  return (
    <div className="flex w-[260px] shrink-0 bg-[#181818]">
      <div className="flex w-[248px] flex-col text-[13.300px] text-[#f3f3f3]">
        <div className="flex h-[1232px] flex-col overflow-hidden">
          <div className="flex h-[52px] shrink-0 items-center justify-between pr-[20px] pl-[16px]">
            <SiOpenai size={20} /><PanelLeft size={18} strokeWidth={1.500} color="#b4b4b4" />
          </div>
          <div className="mt-[8px] flex flex-col">
            <NavRow icon={<SquarePen size={17} strokeWidth={1.600} />} label="New chat" w={58} />
            <NavRow icon={<Search size={17} strokeWidth={1.600} />} label="Search chats" w={77} />
            <NavRow icon={<Images size={17} strokeWidth={1.600} />} label="Library" w={42} />
          </div>
          <div className="mt-[20px] flex flex-col">
            <NavRow icon={<svg width="17" height="17" viewBox="0 0 17 17"><circle cx="8.500" cy="8.500" r="7.300" fill="none" stroke="currentColor" strokeWidth="1.400" /><path d="M6.500 5l5.500 3.500-5.500 3.500z" fill="currentColor" /></svg>} label="Sora" w={27} />
            <NavRow icon={<svg width="16" height="16" viewBox="0 0 16 16" fill="none" stroke="currentColor" strokeWidth="1.500"><circle cx="4" cy="4" r="2.700" /><circle cx="12" cy="4" r="2.700" /><circle cx="4" cy="12" r="2.700" /><circle cx="12" cy="12" r="2.700" /></svg>} label="GPTs" w={30} />
          </div>
          <div className="mt-[21px] flex h-[36px] shrink-0 items-center pl-[16px] text-[#8f8f8f]"><T w={34}>Chats</T></div>
          {CHATS.map(([name, w], i) => (
            <div key={name} className={`ml-[6px] flex h-[36px] w-[233px] shrink-0 items-center rounded-[10px] pl-[10px] ${i === 0 ? "bg-[#242424]" : ""}`}><T w={w}>{name}</T></div>
          ))}
        </div>
        <div className="mr-[14px] flex h-[61px] items-center border-t border-[#262626] pl-[17px]">
          <svg width="18" height="18" viewBox="0 0 18 18" fill="none" stroke="currentColor" strokeWidth="1.300"><path d="M9 1l2.500 1 2.700.3 1 2.500L17 7v4l-1.800 2.200-1 2.500-2.700.3L9 17l-2.500-1-2.700-.3-1-2.500L1 11V7l1.800-2.200 1-2.500L6.500 2z" /><path d="M9 5.500l1 2.500 2.500 1L10 10l-1 2.500L8 10 5.500 9 8 8z" fill="currentColor" stroke="none" /></svg>
          <div className="ml-[10px] flex flex-col items-start leading-[17px]">
            <T w={85}>Upgrade plan</T>
            <T w={170} className="text-[11.500px] text-[#9b9b9b]">More access to the best models</T>
          </div>
        </div>
      </div>
      <div className="flex w-[9px] flex-col items-center pt-[6px] pb-[4px]">
        <Tri c="#4a4a4a" />
        <span className="mt-[5px] h-[806px] w-[9px] rounded-full bg-[#434343]" />
        <span className="mt-auto"><Tri down c="#5c5c5c" /></span>
      </div>
    </div>
  );
}

const B = ({ children }: { children: React.ReactNode }) => <span className="font-semibold">{children}</span>;
const Code = ({ w, children }: { w: number; children: React.ReactNode }) => (
  <span className="inline-flex h-[21px] items-center rounded-[4px] bg-[#424242] px-[5px] font-['Liberation_Mono',monospace] text-[13px] leading-none"><T w={w}>{children}</T></span>
);
const Li = ({ n, children }: { n: number; children: React.ReactNode }) => (
  <div className="flex">
    <T w={14} className="ml-[7px] font-semibold">{n}.</T>
    <div className="ml-[11px] flex flex-col items-start">{children}</div>
  </div>
);

function Chat() {
  return (
    <div className="relative flex flex-1 bg-[#212121] text-[15.200px] leading-[28px] text-[#f0f0f0]">
      <div className="absolute top-0 right-[14px] left-0 flex h-[54px] items-center pl-[18px] text-[#f0f0f0]">
        <T w={68} className="text-[17.200px]">ChatGPT</T>
        <ChevronDown size={14} strokeWidth={1.600} color="#aaa" className="ml-[5px]" />
        <Upload size={17} strokeWidth={1.600} className="ml-auto" />
        <T w={36} className="ml-[8px] text-[13px] font-semibold">Share</T>
        <MoreHorizontal size={19} className="ml-[21px]" />
        <Slot className="ml-[22px] h-[24px] w-[24px] rounded-full bg-[#0a6cd6] text-[11.500px] text-white">DB</Slot>
      </div>
      <div className="ml-[746px] flex w-[768px] flex-col">
        <div className="flex h-[1157px] flex-col overflow-hidden">
          <div className="-mt-[8px] flex h-[44px] w-[429px] shrink-0 items-center justify-center self-end rounded-[22px] bg-[#303030]"><T w={387}>How to import google chrome passwords to bitwarden</T></div>
          <div className="mt-[84px] flex flex-col items-start">
            <T w={760}>You can absolutely import your saved <B>Google Chrome passwords</B> into <B>Bitwarden</B> — it just takes a couple of</T>
            <T w={127}>steps. Here's how:</T>
          </div>
          <div className="mt-[39px] h-[1px] shrink-0 bg-[#303030]" />
          <div className="mt-[41px] flex h-[32px] shrink-0 items-center pl-[3px] text-[19px] font-semibold">
            <svg width="21" height="21" viewBox="0 0 21 21"><rect width="21" height="21" rx="2.500" fill="#3fcf84" /><path d="M4 11l4.500 4.500L17 6" fill="none" stroke="#fff" strokeWidth="2.400" /></svg>
            <T w={506} className="ml-[9px]">Step-by-Step: Import Chrome Passwords into Bitwarden</T>
          </div>
          <div className="mt-[39px] h-[1px] shrink-0 bg-[#303030]" />
          <div className="mt-[44px] flex h-[28px] shrink-0 items-center pl-[8px] text-[19px] font-bold"><Diamond /><T w={439} className="ml-[13px]">Step 1: Export Passwords from Google Chrome</T></div>
          <div className="mt-[9px] flex flex-col gap-[8.300px]">
            <Li n={1}><T w={100}>Open <B>Chrome</B></T></Li>
            <Li n={2}>
              <T w={43}>Go to:</T>
              <T w={289}><B>Settings &gt; Autofill &gt; Password Manager</B></T>
              <T w={230}>or paste this in your address bar:</T>
              <span className="flex h-[28px] items-center"><Code w={207}>chrome://settings/passwords</Code></span>
            </Li>
            <Li n={3}><T w={474}>Next to <B>“Saved Passwords,”</B> click the <B>3 dots (<span className="-mx-[1.500px] font-['DejaVu_Sans_Mono'] text-[13px] leading-none">⋮</span>)</B> &gt; <B>Export passwords</B></T></Li>
            <Li n={4}><T w={315}>Confirm with your <B>computer login password</B></T></Li>
            <Li n={5}><span className="flex h-[28px] items-center gap-[4px]"><T w={310}>Chrome will save a file called something like</T><Code w={154}>Chrome Passwords.csv</Code></span></Li>
          </div>
          <div className="mt-[22px] flex h-[49px] shrink-0 items-stretch leading-[24px]">
            <span className="w-[4px] rounded-full bg-[#4a4a4a]" />
            <div className="ml-[20px] flex flex-col items-start">
              <span className="flex items-center gap-[6px] pl-[2px]">
                <svg width="17" height="16" viewBox="0 0 17 16"><path d="M8.500.500L16.800 15.500H.2z" fill="#f7b04c" /><path d="M8.500 5v5.500M8.500 12v2" stroke="#3d2a12" strokeWidth="1.700" /></svg>
                <T w={682}><B>Security Tip</B>: This file contains <B>plain text passwords</B>. Don’t leave it on your computer longer than</T>
              </span>
              <T w={56}>needed.</T>
            </div>
          </div>
          <div className="mt-[47px] h-[1px] shrink-0 bg-[#303030]" />
          <div className="mt-[44px] flex h-[28px] shrink-0 items-center pl-[8px] text-[19px] font-bold"><Diamond /><T w={396} className="ml-[13px]">Step 2: Import the CSV File into Bitwarden</T></div>
          <div className="mt-[9px] flex flex-col gap-[8px]">
            <Li n={1}><T w={248}>Log in to the <B>Bitwarden Web Vault</B>:</T><T w={194} className="text-[#7ab7ff]">https://vault.bitwarden.com</T></Li>
            <Li n={2}><T w={229}>Go to the <B>Tools</B> tab (left sidebar)</T></Li>
            <Li n={3}><T w={125}>Click <B>Import Data</B></T></Li>
            <Li n={4}><T w={193}>For <B>“Import From,”</B> choose:</T><T w={95}><B>Chrome (csv)</B></T></Li>
            <Li n={5}><T w={462}>Click <B>Choose File</B> and upload the CSV you exported from Chrome</T></Li>
            <Li n={6}><T w={88}>Click <B>Import</B></T></Li>
          </div>
        </div>
        <div className="flex h-[104px] shrink-0 flex-col rounded-[28px] bg-[#303030] pt-[16px] pr-[9px] pl-[21px]">
          <div className="flex"><T w={90} className="text-[#a3a3a3]">Ask anything</T></div>
          <div className="mt-[15px] flex h-[36px] items-center">
            <Plus size={18} strokeWidth={1.600} className="-ml-[3px]" />
            <Settings2 size={17} strokeWidth={1.600} className="ml-[20px]" />
            <T w={31} className="ml-[7px] text-[13.300px]">Tools</T>
            <Mic size={18} strokeWidth={1.600} className="mr-[16px] ml-auto" />
            <Slot className="h-[36px] w-[36px] rounded-full bg-[#515151]"><svg width="16" height="16" viewBox="0 0 16 16" stroke="#b5b5b5" strokeWidth="1.500" strokeLinecap="round"><path d="M2 7v2M6 3v10M10 5v6M14 7v2" /></svg></Slot>
          </div>
        </div>
        <div className="flex h-[32px] items-center justify-center"><T w={270} className="text-[11.500px] text-[#e8e8e8]">ChatGPT can make mistakes. Check important info.</T></div>
      </div>
      <Slot className="absolute top-[1117px] left-[1115px] h-[32px] w-[32px] rounded-full border border-[#3b3b3b] bg-[#212121]"><ArrowDown size={19} strokeWidth={1.700} /></Slot>
      <div className="mr-[3px] ml-auto flex w-[9px] flex-col items-center pt-[6px]">
        <Tri c="#777" />
        <span className="mt-[1006px] h-[95px] w-[8px] shrink-0 rounded-full bg-[#6f6f6f]" />
        <span className="mt-[56px]"><Tri down c="#777" /></span>
      </div>
    </div>
  );
}

function RightMonitor() {
  const ic = { size: 18, strokeWidth: 1.400 };
  return (
    <div className="flex h-[1491px] w-[2560px] shrink-0 flex-col bg-black pt-[51px] text-[#b9bcc8]">
      <VivaldiChrome />
      <div className="flex h-[1293px] shrink-0">
        <div className="flex w-[41px] flex-col items-center bg-[#2f2f38] pt-[5px]">
          <Slot className="h-[37px]"><Bookmark {...ic} /></Slot>
          <Slot className="h-[37px]"><Download {...ic} /></Slot>
          <Slot className="h-[37px]"><CircleArrowRight {...ic} /></Slot>
          <Slot className="h-[37px]"><NotebookPen {...ic} /></Slot>
          <Slot className="h-[37px]"><Languages {...ic} /></Slot>
          <Slot className="h-[37px]"><svg width="17" height="19" viewBox="0 0 17 19" fill="none" stroke="currentColor" strokeWidth="1.300"><path d="M4.500 1.500h8M2.500 4.500h12M1 8h15M2 8c0 6 1 10 4 10h5c3 0 4-4 4-10" /></svg></Slot>
          <Slot className="h-[37px]"><svg width="17" height="19" viewBox="0 0 17 19" fill="none" stroke="currentColor" strokeWidth="1.300"><path d="M1.500 16V3q0-2 2-2h12v13h-12q-2 0-2 2t2 2h12v-4M5 5h7M5 8h4" /></svg></Slot>
          <span className="mt-[8px] mb-[7px] h-[1px] w-[16px] shrink-0 bg-[#5b5c68]" />
          <Slot className="h-[37px]"><FaMastodon size={17} color="#5f4ee6" /></Slot>
          <Slot className="h-[37px]"><Viv s={16} /></Slot>
          <Slot className="h-[37px]"><FaWikipediaW size={15} color="#0c0c10" /></Slot>
          <Slot className="h-[37px]"><SquarePlus {...ic} /></Slot>
        </div>
        <Sidebar />
        <Chat />
      </div>
      <div className="flex h-[36px] shrink-0 items-center border-t border-[#1f1f28] bg-[#2f2f38] pl-[11px] text-[11.500px]">
        <Settings {...ic} />
        <svg width="18" height="16" viewBox="0 0 18 16" fill="none" stroke="currentColor" strokeWidth="1.300" className="ml-[18px]"><rect x="1.500" y="1.500" width="6" height="13" rx="1.500" /><rect x="10.500" y="1.500" width="6" height="13" rx="1.500" /></svg>
        <Cloud {...ic} className="ml-[17px]" />
        <svg width="18" height="18" viewBox="0 0 18 18" fill="none" stroke="currentColor" strokeWidth="1.300" className="ml-auto"><path d="M1 5V3q0-2 2-2h2M13 1h2q2 0 2 2v2M17 13v2q0 2-2 2h-2M5 17H3q-2 0-2-2v-2" /><circle cx="9" cy="9" r="3.800" /><circle cx="9" cy="9" r=".8" /></svg>
        <svg width="20" height="18" viewBox="0 0 20 18" fill="none" stroke="currentColor" strokeWidth="1.300" className="ml-[16px]"><path d="M8 2H4Q1 2 1 5v8q0 3 3 3h4M12 2h4q3 0 3 3v8q0 3-3 3h-4" /></svg>
        <svg width="18" height="18" viewBox="0 0 18 18" fill="none" stroke="currentColor" strokeWidth="1.300" className="ml-[17px]"><path d="M8 15H4q-2 0-2-2V3q0-2 2-2h8q2 0 2 2v6" /><circle cx="13" cy="14" r="3.300" /><path d="M2 12l4-3 3 2" /></svg>
        <T w={27} className="ml-[17px] text-[#6e707c]">Reset</T>
        <span className="relative ml-[12px] h-[4px] w-[129px] rounded-[1px] bg-[#bcc2d0]"><span className="absolute -top-[5px] left-[19px] h-[14px] w-[14px] rounded-full border-[1.500px] border-[#d0d4de] bg-[#2f2f38]" /></span>
        <T w={32} className="ml-[5px] text-[#d8dae2]">100 %</T>
        <T w={41} className="mr-[11px] ml-[20px] text-[#d8dae2]">7:55 PM</T>
      </div>
    </div>
  );
}

export default function App() {
  return (
    <div className="h-[1193px] w-[4096px] overflow-hidden bg-[#2f2f38]">
      <div data-stage className="flex h-[1491px] w-[5120px] font-['Open_Sans','Noto_Sans',sans-serif] [zoom:0.8]">
        <LeftMonitor />
        <RightMonitor />
      </div>
    </div>
  );
}
